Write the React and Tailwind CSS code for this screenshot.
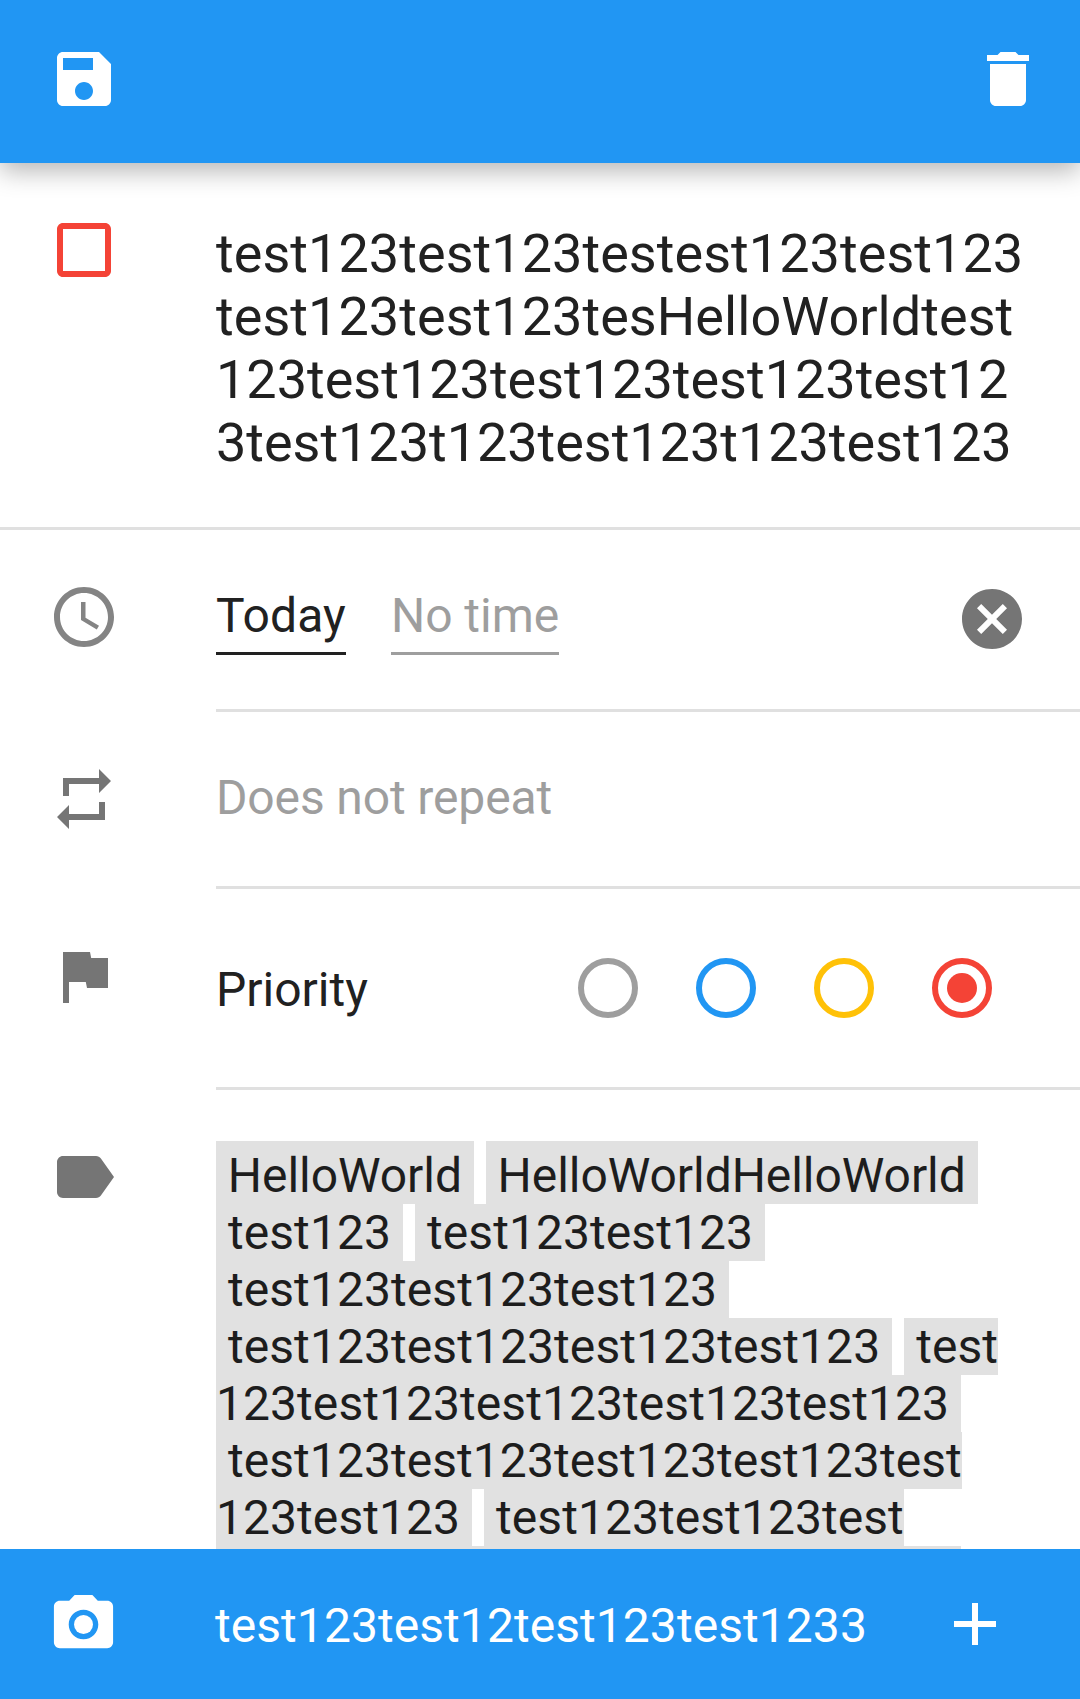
import React from "react";

const PATHS = {
  save: "M17 3H5c-1.11 0-2 .9-2 2v14c0 1.1.89 2 2 2h14c1.1 0 2-.9 2-2V7l-4-4zm-5 16c-1.66 0-3-1.34-3-3s1.34-3 3-3 3 1.34 3 3-1.34 3-3 3zm3-10H5V5h10v4z",
  trash: "M6 19c0 1.1.9 2 2 2h8c1.1 0 2-.9 2-2V7H6v12zM19 4h-3.5l-1-1h-5l-1 1H5v2h14V4z",
  checkbox: "M19 5v14H5V5h14m0-2H5c-1.1 0-2 .9-2 2v14c0 1.1.9 2 2 2h14c1.1 0 2-.9 2-2V5c0-1.1-.9-2-2-2z",
  cancel: "M12 2C6.47 2 2 6.47 2 12s4.47 10 10 10 10-4.47 10-10S17.53 2 12 2zm5 13.59L15.59 17 12 13.41 8.41 17 7 15.59 10.59 12 7 8.41 8.41 7 12 10.59 15.59 7 17 8.41 13.41 12 17 15.59z",
  repeat: "M7 7h10v3l4-4-4-4v3H5v6h2V7zm10 10H7v-3l-4 4 4 4v-3h12v-6h-2v4z",
  flag: "M14.4 6L14 4H5v17h2v-7h5.6l.4 2h7V6z",
  label: "M17.63 5.84C17.27 5.33 16.67 5 16 5L5 5.01C3.9 5.01 3 5.9 3 7v10c0 1.1.9 1.99 2 1.99L16 19c.67 0 1.27-.33 1.63-.84L22 12l-4.37-6.16z",
  add: "M19 13h-6v6h-2v-6H5v-2h6V5h2v6h6v2z",
};

function Icon({ name, className = "" }) {
  return (
    <svg viewBox="0 0 24 24" fill="currentColor" className={`block size-[72px] shrink-0 ${className}`}>
      <path d={PATHS[name]} />
    </svg>
  );
}

function Clock() {
  return (
    <svg viewBox="0 0 24 24" fill="currentColor" className="block size-[72px] shrink-0 text-[#848484]">
      <path d="M11.99 2C6.47 2 2 6.48 2 12s4.47 10 9.99 10C17.52 22 22 17.52 22 12S17.52 2 11.99 2zM12 20c-4.42 0-8-3.58-8-8s3.58-8 8-8 8 3.58 8 8-3.58 8-8 8z" />
      <path d="M12.5 7H11v6l5.25 3.15.75-1.23-4.5-2.67z" />
    </svg>
  );
}

function Camera() {
  return (
    <svg viewBox="0 0 24 24" fill="currentColor" className="mt-px block size-[71px] shrink-0">
      <circle cx="12" cy="12" r="3.2" />
      <path d="M9 2L7.17 4H4c-1.1 0-2 .9-2 2v12c0 1.1.9 2 2 2h16c1.1 0 2-.9 2-2V6c0-1.1-.9-2-2-2h-3.17L15 2H9zm3 15c-2.76 0-5-2.24-5-5s2.24-5 5-5 5 2.24 5 5-2.24 5-5 5z" />
    </svg>
  );
}

function Radio({ className, checked }) {
  return (
    <span className={`flex size-[60px] items-center justify-center rounded-full border-[6px] border-current ${className}`}>
      {checked && <span className="size-[30px] rounded-full bg-current" />}
    </span>
  );
}

const TITLE = [
  { text: "test123test123testest123test123", tracking: "tracking-[0.05px]" },
  { text: "test123test123tesHelloWorldtest", tracking: "tracking-[0.05px]" },
  { text: "123test123test123test123test12", tracking: "tracking-[0px]" },
  { text: "3test123t123test123t123test123", tracking: "tracking-[-0.03px]" },
];

const TAG_LINES = [
  { tags: [" HelloWorld ", " HelloWorldHelloWorld "], style: "tracking-[-0.06px]", pad: "pt-1.5" },
  { tags: [" test123 ", " test123test123 "], style: "tracking-[0.07px]" },
  { tags: [" test123test123test123 "], style: "tracking-[0.07px]" },
  { tags: [" test123test123test123test123 ", " test"], style: "tracking-[0.07px]" },
  { tags: ["123test123test123test123test123 "], style: "tracking-[0.06px]" },
  { tags: [" test123test123test123test123test"], style: "tracking-[0.06px]" },
  { tags: ["123test123 ", " test123test123test"], style: "tracking-[0.06px]" },
];

export default function App() {
  return (
    <div className="flex h-[1699px] w-[1080px] flex-col overflow-hidden bg-white font-['Roboto',sans-serif] text-[48px] leading-[57px] text-[#212121]">
      <header className="relative z-10 flex h-[163px] shrink-0 items-start justify-between bg-[#2196f3] pr-[36px] pl-12 pt-[43px] text-white shadow-[0_8px_24px_rgba(0,0,0,0.29)]">
        <Icon name="save" />
        <Icon name="trash" />
      </header>

      <main className="flex min-h-0 flex-1 flex-col overflow-hidden">
        <section className="flex h-[367px] shrink-0 border-b-[3px] border-[#e0e0e0] pl-12">
          <Icon name="checkbox" className="mt-[51px] text-[#f44336]" />
          <div className="ml-24 mt-[59px] whitespace-pre text-[54px] leading-[63px]">
            {TITLE.map(({ text, tracking }) => (
              <div key={text} className={tracking}>{text}</div>
            ))}
          </div>
        </section>

        <section className="flex h-[182px] shrink-0 pl-12">
          <div className="w-[168px] shrink-0 pt-[51px]">
            <Clock />
          </div>
          <div className="flex flex-1 border-b-[3px] border-[#e0e0e0] pr-[52px]">
            <span className="mt-[57px] h-[68px] w-[130px] border-b-[3px] border-[#212121] whitespace-nowrap tracking-[0.15px]">Today</span>
            <span className="mt-[57px] ml-[45px] h-[68px] w-[168px] border-b-[3px] border-[#9e9e9e] whitespace-nowrap tracking-[-0.05px] text-[#9e9e9e]">No time</span>
            <Icon name="cancel" className="mt-[53px] ml-auto text-[#757575]" />
          </div>
        </section>

        <section className="flex h-[177px] shrink-0 pl-12">
          <div className="w-[168px] shrink-0 pt-[51px]">
            <Icon name="repeat" className="text-[#757575]" />
          </div>
          <div className="flex-1 border-b-[3px] border-[#e0e0e0] pt-[57px] tracking-[-0.13px] text-[#9e9e9e]">Does not repeat</div>
        </section>

        <section className="flex h-[201px] shrink-0 pl-12">
          <div className="w-[168px] shrink-0 pt-[51px]">
            <Icon name="flag" className="text-[#757575]" />
          </div>
          <div className="flex flex-1 justify-between border-b-[3px] border-[#e0e0e0] pr-[88px]">
            <span className="mt-[72px]">Priority</span>
            <div className="mt-[69px] flex gap-[58px]">
              <Radio className="text-[#9e9e9e]" />
              <Radio className="text-[#2196f3]" />
              <Radio className="text-[#ffc107]" />
              <Radio className="text-[#f44336]" checked />
            </div>
          </div>
        </section>

        <section className="flex min-h-0 flex-1 pl-12">
          <div className="w-[168px] shrink-0 pt-[51px]">
            <Icon name="label" className="text-[#757575]" />
          </div>
          <div className="mt-[51px] text-[#1d1d1d]">
            {TAG_LINES.map(({ tags, style, pad = "" }, i) => (
              <div key={i} className={`flex gap-3 whitespace-pre ${style}`}>
                {tags.map((tag) => (
                  <span key={tag} className={`bg-[#e1e1e1] ${pad}`}>
                    {tag}
                  </span>
                ))}
              </div>
            ))}
            <div className="h-[3px] w-[745px] bg-[#e1e1e1]" />
          </div>
        </section>
      </main>

      <footer className="relative z-10 flex h-[150px] shrink-0 items-start bg-[#2196f3] pr-[69px] pl-12 pt-[39px] text-white">
        <Camera />
        <span className="mt-[9px] ml-24 tracking-[0.06px]">test123test12test123test1233</span>
        <Icon name="add" className="ml-auto" />
      </footer>
    </div>
  );
}
